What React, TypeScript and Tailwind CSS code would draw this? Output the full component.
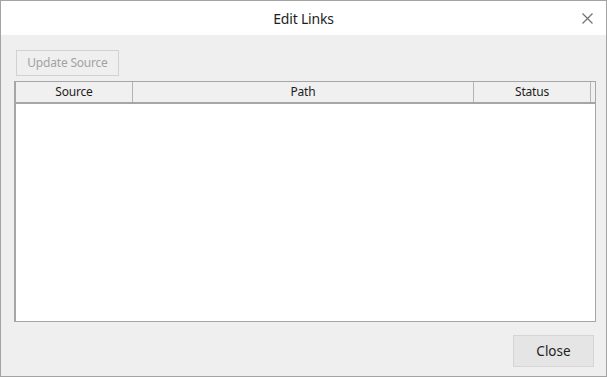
import React from "react";

export default function App() {
  return (
    <div
      className="w-[607px] h-[377px] border border-[#a3a3a3] bg-[#efefef] flex flex-col text-[#1e1e1e]"
      style={{ fontFamily: '"Noto Sans", "Open Sans", sans-serif' }}
    >
      <div className="h-[34px] bg-white flex items-center justify-center relative shrink-0">
        <span className="text-[14px] tracking-[-0.2px] mt-[1px]">Edit Links</span>
        <svg
          className="absolute right-[13px] top-[12px]"
          width="11"
          height="11"
          viewBox="0 0 11 11"
        >
          <path d="M0.5 0.5 L10.5 10.5 M10.5 0.5 L0.5 10.5" stroke="#757575" strokeWidth="1.3" />
        </svg>
      </div>
      <div className="flex-1 flex flex-col pl-[13px] pr-[10px] pt-[15px] pb-[9px]">
        <button className="ml-[2px] w-[103px] h-[26px] border border-[#d2d2d2] bg-[#efefef] text-[12px] text-[#a2a2a2] tracking-[-0.2px] flex items-center justify-center">
          Update Source
        </button>
        <div className="mt-[5px] h-[241px] border border-l-2 border-[#a6a6a6] bg-white flex flex-col">
          <div className="h-[22px] flex bg-[#f0f0f0] border-b-2 border-[#a6a6a6] text-[12px] tracking-[-0.2px] shrink-0">
            <div className="w-[117px] border-r border-[#b4b4b4] flex items-center justify-center">Source</div>
            <div className="w-[341px] border-r border-[#b4b4b4] flex items-center justify-center">Path</div>
            <div className="w-[117px] border-r border-[#b4b4b4] flex items-center justify-center">Status</div>
            <div className="flex-1" />
          </div>
          <div className="flex-1" />
        </div>
        <div className="flex-1 flex items-end justify-end pr-[2px]">
          <button className="w-[81px] h-[32px] border border-[#d5d5d5] bg-[#e5e5e5] text-[13.5px] flex items-center justify-center">
            Close
          </button>
        </div>
      </div>
    </div>
  );
}
